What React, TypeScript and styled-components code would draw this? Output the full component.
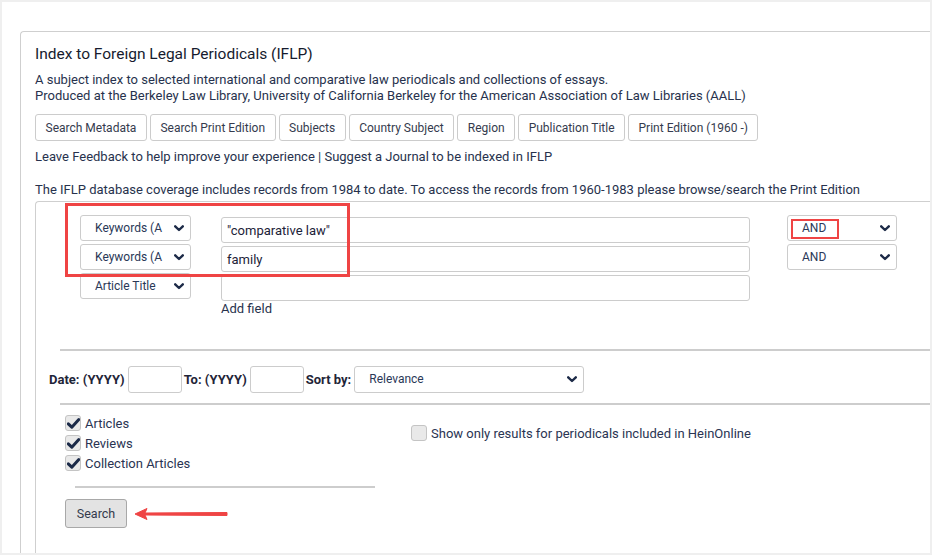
import styled, { createGlobalStyle } from 'styled-components';

const GlobalStyle = createGlobalStyle`
  html, body {
    margin: 0;
    padding: 0;
    background: #efefef;
  }
  body {
    font-family: Roboto, "Liberation Sans", Arial, sans-serif;
    color: #27324d;
  }
`;

const Frame = styled.div`
  margin: 2px;
  width: 928px;
  height: 551px;
  background: #fff;
  overflow: hidden;
  padding: 29px 0 0 18px;
  box-sizing: border-box;
`;

const Panel = styled.div`
  width: 940px;
  border: 1px solid #cfcfcf;
  border-right: none;
  border-radius: 4px 0 0 0;
  padding: 12px 0 0 14px;
  box-sizing: border-box;
`;

const Title = styled.h1`
  margin: 0 0 8px;
  font-size: 15.5px;
  font-weight: 400;
  line-height: 20px;
  color: #161b2e;
`;

const Text = styled.p<{ $top?: number }>`
  margin: ${(p) => p.$top ?? 0}px 0 0;
  font-size: 13px;
  line-height: 16px;
`;

const Tabs = styled.div`
  display: flex;
  gap: 3px;
  margin-top: 10px;
`;

const Tab = styled.button`
  height: 27px;
  padding: 0 9.5px;
  background: #fff;
  border: 1px solid #cccccc;
  border-radius: 3px;
  font-family: inherit;
  font-size: 12px;
  color: #353b4e;
`;

const SearchBox = styled.div`
  position: relative;
  margin-top: 3px;
  height: 400px;
  border: 1px solid #cfcfcf;
  border-right: none;
  border-radius: 4px 0 0 0;
  padding-top: 13px;
`;

const QueryRows = styled.div`
  display: flex;
  flex-direction: column;
  gap: 3px;
  padding-left: 44px;
`;

const QueryRow = styled.div`
  display: flex;
  align-items: flex-start;
  height: 26px;
`;

const SelectBox = styled.div<{ $width: number; $height?: number }>`
  position: relative;
  display: flex;
  align-items: center;
  justify-content: space-between;
  width: ${(p) => p.$width}px;
  height: ${(p) => p.$height ?? 26}px;
  padding: 0 6px 0 14px;
  box-sizing: border-box;
  border: 1px solid #cccccc;
  border-radius: 3px;
  background: #fff;
  font-size: 12px;
  color: #2a3857;
  white-space: nowrap;
  flex-shrink: 0;
`;

const BoolSelect = styled(SelectBox)`
  margin-left: 37px;
`;

const TermInput = styled.div`
  margin: 2px 0 0 30px;
  width: 529px;
  height: 26px;
  flex-shrink: 0;
  box-sizing: border-box;
  border: 1px solid #cccccc;
  border-radius: 3px;
  padding: 0 5px;
  display: flex;
  align-items: center;
  font-size: 13px;
  color: #1c2238;
`;

const AddField = styled.div`
  margin: 2px 0 0 185px;
  font-size: 13px;
  line-height: 16px;
`;

const Rule = styled.div<{ $top: number; $left: number; $width?: number }>`
  margin: ${(p) => p.$top}px 0 0 ${(p) => p.$left}px;
  height: 2px;
  width: ${(p) => (p.$width ? `${p.$width}px` : 'auto')};
  background: #cdcdcd;
`;

const DateRow = styled.div`
  display: flex;
  align-items: center;
  height: 28px;
  margin-top: 14px;
  padding-left: 13px;
`;

const Label = styled.span`
  font-size: 13px;
  font-weight: 700;
  color: #1f2538;
  margin-right: 3px;
`;

const YearInput = styled.div`
  width: 54px;
  height: 27px;
  box-sizing: border-box;
  border: 1px solid #cccccc;
  border-radius: 3px;
  margin-right: 2px;
`;

const Options = styled.div`
  display: flex;
  margin-top: 8px;
  padding-left: 29px;
`;

const OptionColumn = styled.div<{ $width?: number; $top?: number }>`
  display: flex;
  flex-direction: column;
  width: ${(p) => (p.$width ? `${p.$width}px` : 'auto')};
  margin-top: ${(p) => p.$top ?? 0}px;
`;

const Option = styled.label`
  display: flex;
  align-items: center;
  height: 20px;
  gap: 4px;
  font-size: 13px;
  color: #2a3452;
`;

const Box = styled.span`
  display: inline-flex;
  align-items: center;
  justify-content: center;
  width: 16px;
  height: 16px;
  box-sizing: border-box;
  border: 1px solid #c4c4c4;
  border-radius: 3px;
  background: #e9e9e9;
`;

const Actions = styled.div`
  display: flex;
  align-items: center;
  margin-top: 11px;
  padding-left: 29px;
`;

const SearchButton = styled.button`
  width: 62px;
  height: 29px;
  background: #e3e3e3;
  border: 1px solid #a8a8a8;
  border-radius: 3px;
  font-family: inherit;
  font-size: 12.5px;
  color: #333a4c;
`;

const Arrow = styled.svg`
  margin-left: 7px;
`;

const Highlight = styled.div<{ $left: number; $top: number; $w: number; $h: number; $b: number }>`
  position: absolute;
  left: ${(p) => p.$left}px;
  top: ${(p) => p.$top}px;
  width: ${(p) => p.$w}px;
  height: ${(p) => p.$h}px;
  border: ${(p) => p.$b}px solid #ef4444;
  box-sizing: border-box;
  pointer-events: none;
`;

function Chevron() {
  return (
    <svg width="10" height="7" viewBox="0 0 10 7">
      <path d="M1.2 1.3 L5 5 L8.8 1.3" fill="none" stroke="#1d2b48" strokeWidth="2.4" strokeLinecap="round" strokeLinejoin="round" />
    </svg>
  );
}

function Check({ checked }: { checked?: boolean }) {
  return (
    <Box>
      {checked && (
        <svg width="13" height="11" viewBox="0 0 13 11">
          <path d="M1.3 5.8 L4.8 9.2 L11.8 1.6" fill="none" stroke="#1b2a48" strokeWidth="3" strokeLinecap="round" strokeLinejoin="round" />
        </svg>
      )}
    </Box>
  );
}

const tabs = [
  'Search Metadata',
  'Search Print Edition',
  'Subjects',
  'Country Subject',
  'Region',
  'Publication Title',
  'Print Edition (1960 -)',
];

const rows = [
  { field: 'Keywords (A', term: '"comparative law"', bool: 'AND' },
  { field: 'Keywords (A', term: 'family', bool: 'AND' },
  { field: 'Article Title', term: '', bool: '' },
];

export default function App() {
  return (
    <>
      <GlobalStyle />
      <Frame>
        <Panel>
          <Title>Index to Foreign Legal Periodicals (IFLP)</Title>
          <Text>
            A subject index to selected international and comparative law periodicals and collections of essays.
            <br />
            Produced at the Berkeley Law Library, University of California Berkeley for the American Association of Law Libraries (AALL)
          </Text>
          <Tabs>
            {tabs.map((t) => (
              <Tab key={t}>{t}</Tab>
            ))}
          </Tabs>
          <Text $top={8}>Leave Feedback to help improve your experience | Suggest a Journal to be indexed in IFLP</Text>
          <Text $top={17}>
            The IFLP database coverage includes records from 1984 to date. To access the records from 1960-1983 please browse/search the Print Edition
          </Text>
          <SearchBox>
            <QueryRows>
              {rows.map((r, i) => (
                <QueryRow key={i}>
                  <SelectBox $width={111}>
                    {r.field}
                    <Chevron />
                  </SelectBox>
                  <TermInput>{r.term}</TermInput>
                  {r.bool && (
                    <BoolSelect $width={110}>
                      {r.bool}
                      <Chevron />
                      {i === 0 && <Highlight $left={3} $top={3} $w={48} $h={20} $b={2} />}
                    </BoolSelect>
                  )}
                </QueryRow>
              ))}
            </QueryRows>
            <AddField>Add field</AddField>
            <Rule $top={32} $left={24} />
            <DateRow>
              <Label>Date: (YYYY)</Label>
              <YearInput />
              <Label>To: (YYYY)</Label>
              <YearInput />
              <Label>Sort by:</Label>
              <SelectBox $width={230} $height={27}>
                Relevance
                <Chevron />
              </SelectBox>
            </DateRow>
            <Rule $top={10} $left={24} />
            <Options>
              <OptionColumn $width={346}>
                <Option><Check checked />Articles</Option>
                <Option><Check checked />Reviews</Option>
                <Option><Check checked />Collection Articles</Option>
              </OptionColumn>
              <OptionColumn $top={10}>
                <Option><Check />Show only results for periodicals included in HeinOnline</Option>
              </OptionColumn>
            </Options>
            <Rule $top={13} $left={39} $width={300} />
            <Actions>
              <SearchButton>Search</SearchButton>
              <Arrow width="96" height="14" viewBox="0 0 96 14">
                <path d="M1 7 L13 1.5 L11 6 L93 5.5 L93 8.5 L11 8 L13 12.5 Z" fill="#ef4444" stroke="#ef4444" strokeWidth="1" strokeLinejoin="round" />
              </Arrow>
            </Actions>
            <Highlight $left={29} $top={1} $w={285} $h={74} $b={3} />
          </SearchBox>
        </Panel>
      </Frame>
    </>
  );
}
